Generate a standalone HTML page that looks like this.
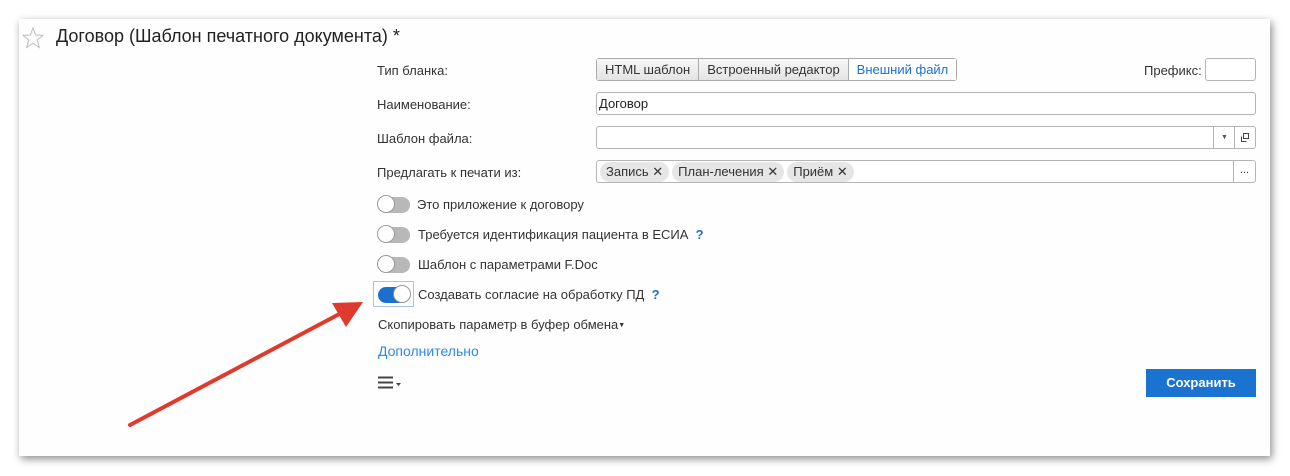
<!DOCTYPE html>
<html><head><meta charset="utf-8"><style>
body{margin:0;width:1290px;height:476px;background:#fff;position:relative;overflow:hidden;font-family:"Liberation Sans",Arial,sans-serif;font-size:13px;color:#333}
.panel{position:absolute;left:19px;top:19px;width:1251px;height:437px;background:#fefefe;box-shadow:2px 3px 8px rgba(0,0,0,.45)}
.a{position:absolute;white-space:nowrap}
.inp{position:absolute;border:1px solid #b5b5b5;border-radius:3px;background:#fff;height:23px;box-sizing:border-box}
.tog{position:absolute;width:32px;height:16px;border-radius:8px;background:#b8b8b8}
.tog::after{content:"";position:absolute;left:-1px;top:-2px;width:18px;height:18px;border-radius:50%;background:#fff;border:1px solid #999;box-sizing:border-box;}
.tog.on::after{left:15px}
.tag{display:inline-block;background:#e6e6e6;border-radius:10px;padding:2px 6px;margin-right:3px;line-height:16px}
.q{color:#1a6fcf;font-weight:bold}
</style></head><body>
<div class="panel"></div>
<svg class="a" style="left:22px;top:27px" width="22" height="22" viewBox="0 0 22 22"><polygon points="11,1 13.6,8 21,8.3 15.2,13 17.3,20.5 11,16.2 4.7,20.5 6.8,13 1,8.3 8.4,8" fill="none" stroke="#bbb" stroke-width="1"/></svg>
<div class="a" style="left:56px;top:26px;font-size:18px;color:#222">Договор (Шаблон печатного документа) *</div>

<div class="a" style="left:377px;top:63px">Тип бланка:</div>
<div class="a" style="left:596px;top:58px;height:23px;border:1px solid #aaa;border-radius:3px;display:flex;box-sizing:border-box;line-height:21px">
<div style="padding:0 8px;background:linear-gradient(#f6f6f6,#e4e4e4);border-right:1px solid #aaa">HTML шаблон</div>
<div style="padding:0 8px;background:linear-gradient(#f6f6f6,#e4e4e4);border-right:1px solid #aaa">Встроенный редактор</div>
<div style="padding:0 8px;background:#fff;color:#1a6fcf">Внешний файл</div></div>
<div class="a" style="left:1144px;top:63px">Префикс:</div>
<div class="inp" style="left:1205px;top:58px;width:51px"></div>

<div class="a" style="left:377px;top:97px">Наименование:</div>
<div class="inp" style="left:596px;top:92px;width:660px;padding:3px 2px;color:#222">Договор</div>

<div class="a" style="left:377px;top:131px">Шаблон файла:</div>
<div class="inp" style="left:596px;top:126px;width:660px">
<div style="position:absolute;right:20px;top:0;bottom:0;width:21px;border-left:1px solid #b5b5b5;text-align:center;font-size:7px;line-height:21px;color:#555">▼</div>
<div style="position:absolute;right:0;top:0;bottom:0;width:20px;border-left:1px solid #b5b5b5"><svg width="20" height="21"><rect x="8.5" y="6.5" width="5" height="5" fill="none" stroke="#444"/><path d="M6.5 9.5v5h5" fill="none" stroke="#444"/></svg></div></div>

<div class="a" style="left:377px;top:165px">Предлагать к печати из:</div>
<div class="inp" style="left:596px;top:160px;width:660px;padding:1px 3px">
<span class="tag">Запись ✕</span><span class="tag">План-лечения ✕</span><span class="tag">Приём ✕</span>
<div style="position:absolute;right:0;top:0;bottom:0;width:21px;border-left:1px solid #b5b5b5;text-align:center;line-height:18px;font-size:11px">...</div></div>

<div class="tog" style="left:378px;top:197px"></div>
<div class="a" style="left:417px;top:197px">Это приложение к договору</div>
<div class="tog" style="left:378px;top:227px"></div>
<div class="a" style="left:418px;top:227px">Требуется идентификация пациента в ЕСИА <span class="q">&nbsp;?</span></div>
<div class="tog" style="left:378px;top:257px"></div>
<div class="a" style="left:418px;top:257px">Шаблон с параметрами F.Doc</div>
<div class="a" style="left:373px;top:281px;width:41px;height:26px;border:1px solid #a7c4e6;box-sizing:border-box"></div>
<div class="tog on" style="left:378px;top:287px;background:#1a6fcf"></div>
<div class="a" style="left:418px;top:287px">Создавать согласие на обработку ПД <span class="q">&nbsp;?</span></div>
<div class="a" style="left:378px;top:317px">Скопировать параметр в буфер обмена<span style="font-size:7px;vertical-align:2px">▼</span></div>
<div class="a" style="left:378px;top:343px;font-size:14px;color:#2d8ae6">Дополнительно</div>
<svg class="a" style="left:378px;top:376px" width="26" height="14"><path d="M0 1.5h15M0 6.5h15M0 11.5h15" stroke="#444" stroke-width="2"/><path d="M18 7h5l-2.5 3z" fill="#444"/></svg>
<div class="a" style="left:1146px;top:369px;width:110px;height:28px;background:#1a73d0;color:#fff;font-weight:bold;font-size:13px;text-align:center;line-height:28px">Сохранить</div>

<svg class="a" style="left:0;top:0" width="1290" height="476"><line x1="130" y1="425" x2="345" y2="311" stroke="#e03a2e" stroke-width="4" stroke-linecap="round"/><polygon points="363,302 332,303 346,327" fill="#e03a2e"/></svg>
</body></html>
